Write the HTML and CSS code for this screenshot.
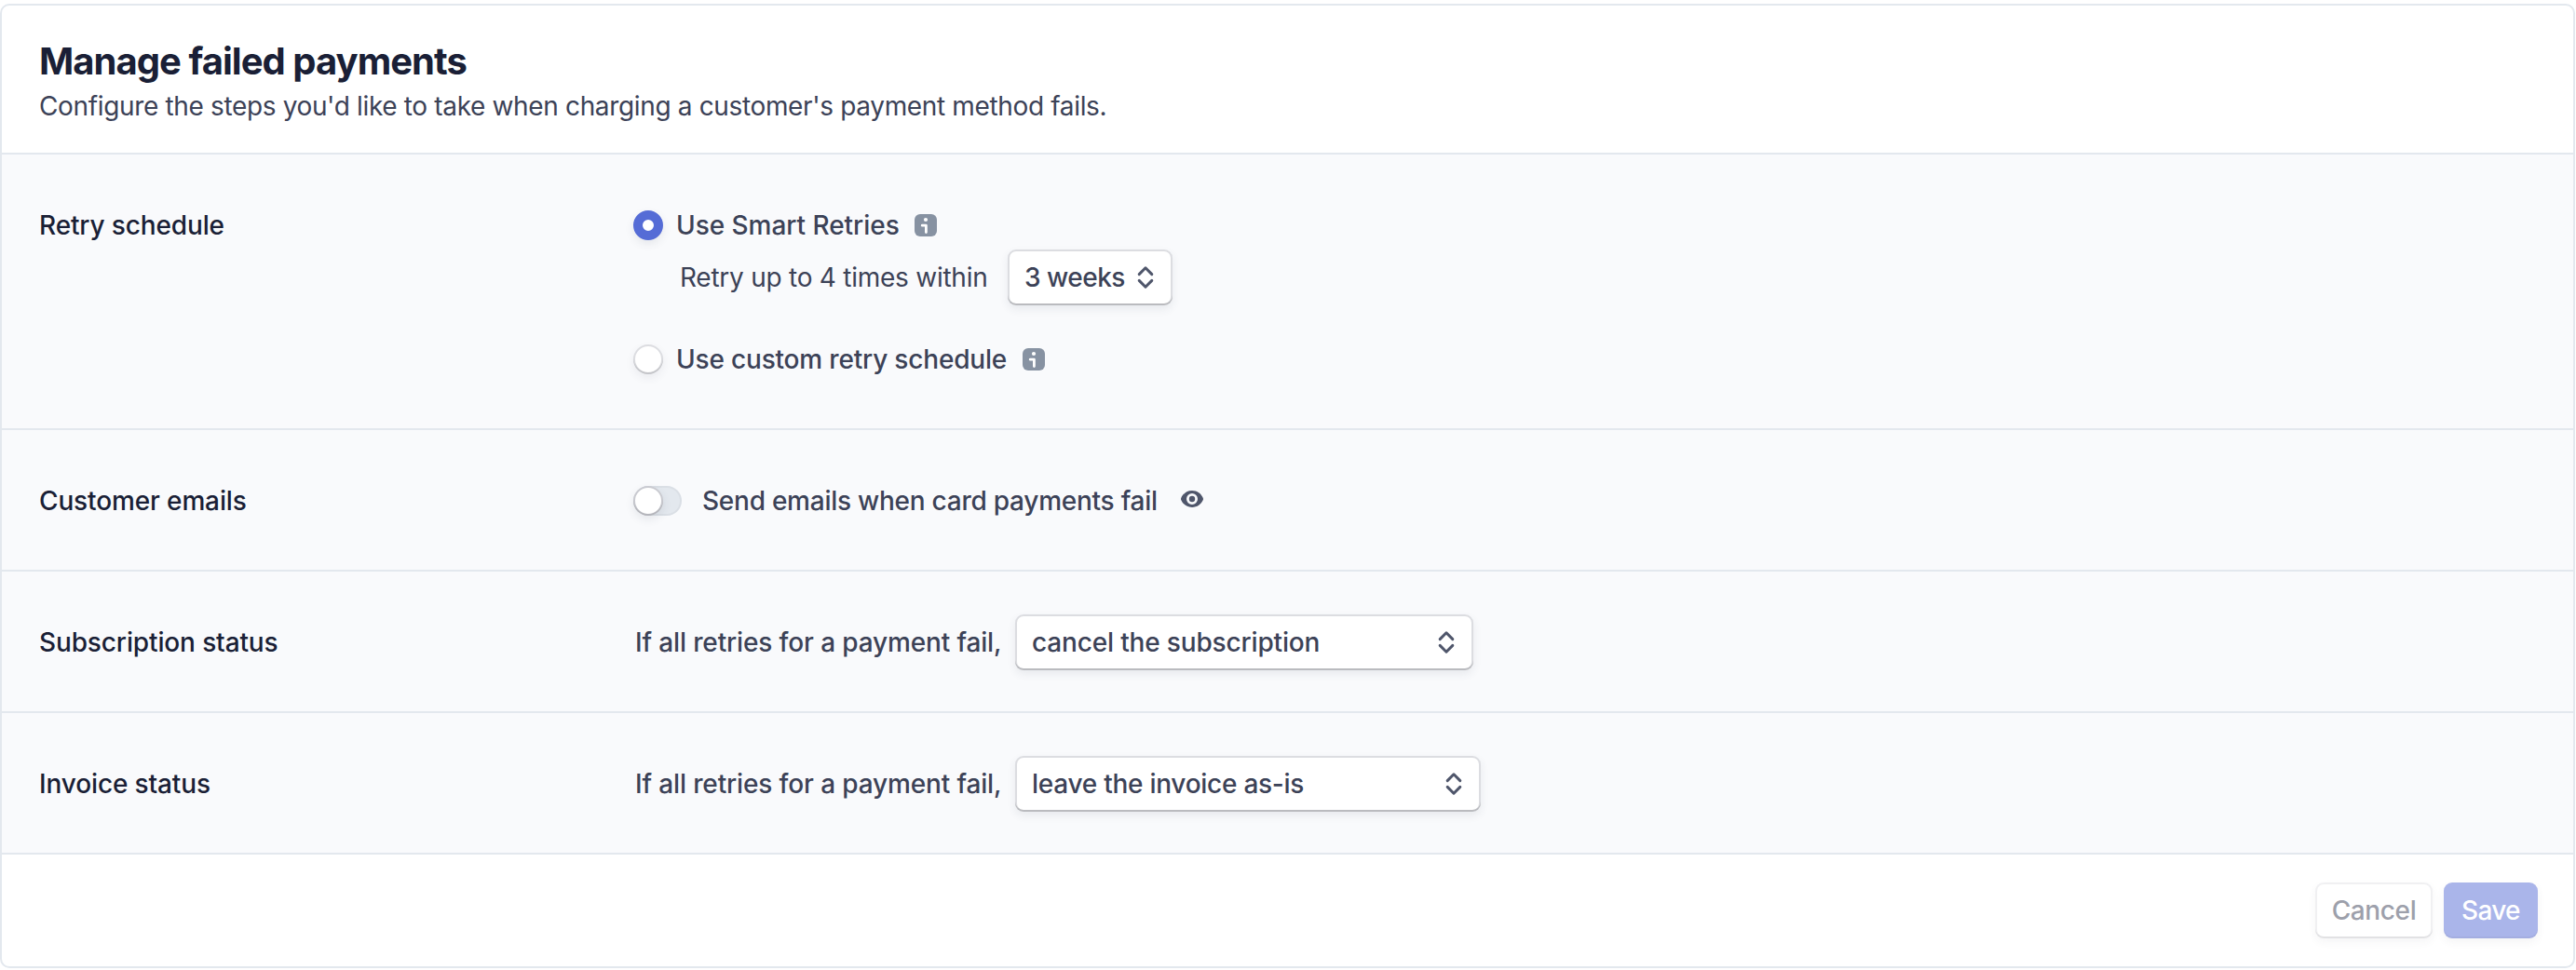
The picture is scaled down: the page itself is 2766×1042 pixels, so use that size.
FILE: index.html
```html
<!DOCTYPE html>
<html lang="en">
<head>
<meta charset="utf-8">
<title>Manage failed payments</title>
<link rel="stylesheet" href="styles.css">
</head>
<body>
<svg class="sprite" width="0" height="0" aria-hidden="true">
  <symbol id="info" viewBox="0 0 24 24">
    <rect width="24" height="24" rx="6" fill="#8792a2"/>
    <circle cx="12" cy="6" r="2.1" fill="#fff"/>
    <path d="M8.2 12.2H12.4V19.6" fill="none" stroke="#fff" stroke-width="2.800" stroke-linecap="round" stroke-linejoin="round"/>
  </symbol>
  <symbol id="chevrons" viewBox="0 0 18 26">
    <path d="M2.2 9.6L9 2.8L15.8 9.6M2.2 16.4L9 23.2L15.8 16.4" fill="none" stroke="#4f566b" stroke-width="3" stroke-linecap="round" stroke-linejoin="round"/>
  </symbol>
  <symbol id="eye" viewBox="0 0 24 18">
    <path fill="#4f566b" fill-rule="evenodd" d="M12 0C6.5 0 2.2 3.4.3 7.7Q-.3 9 .3 10.3C2.2 14.6 6.500 18 12 18S21.800 14.600 23.700 10.300Q24.300 9 23.700 7.700C21.800 3.400 17.500 0 12 0ZM12 3A6 6 0 1 1 12 15A6 6 0 1 1 12 3Z"/>
    <circle cx="12" cy="9" r="3.200" fill="#4f566b"/>
  </symbol>
</svg>
<main class="card">
  <header class="header">
    <h1 class="title">Manage failed payments</h1>
    <p class="description">Configure the steps you'd like to take when charging a customer's payment method fails.</p>
  </header>

  <section class="row">
    <h2 class="label">Retry schedule</h2>
    <div class="options">
      <div class="option option-first">
        <span class="radio radio-on"></span>
        <span class="option-text smart">Use Smart Retries</span>
        <svg class="info"><use href="#info"/></svg>
      </div>
      <div class="retry-line">
        <span class="retry-text">Retry up to 4 times within</span>
        <div class="select select-weeks"><span class="weeks">3 weeks</span><svg class="chevrons"><use href="#chevrons"/></svg></div>
      </div>
      <div class="option option-last">
        <span class="radio"></span>
        <span class="option-text custom">Use custom retry schedule</span>
        <svg class="info"><use href="#info"/></svg>
      </div>
    </div>
  </section>

  <section class="row">
    <h2 class="label">Customer emails</h2>
    <div class="control">
      <span class="toggle"><span class="knob"></span></span>
      <span class="toggle-text">Send emails when card payments fail</span>
      <svg class="eye"><use href="#eye"/></svg>
    </div>
  </section>

  <section class="row">
    <h2 class="label">Subscription status</h2>
    <div class="control">
      <span class="prefix">If all retries for a payment fail,</span>
      <div class="select select-subscription"><span class="subscription-value">cancel the subscription</span><svg class="chevrons"><use href="#chevrons"/></svg></div>
    </div>
  </section>

  <section class="row">
    <h2 class="label">Invoice status</h2>
    <div class="control">
      <span class="prefix">If all retries for a payment fail,</span>
      <div class="select select-invoice"><span class="invoice-value">leave the invoice as-is</span><svg class="chevrons"><use href="#chevrons"/></svg></div>
    </div>
  </section>

  <footer class="footer">
    <button class="button cancel">Cancel</button>
    <button class="button save">Save</button>
  </footer>
</main>
</body>
</html>
```
FILE: styles.css
```css
* { box-sizing: border-box; }

body {
  margin: 0;
  padding: 4px 1px 0 0;
  background: #fff;
  color: #3c4257;
  font: 500 28px/40px Inter, "Liberation Sans", sans-serif;
}

.sprite { display: block; }

.card {
  border: 2px solid #e3e8ee;
  border-radius: 10px;
  overflow: hidden;
  background: #fff;
}

.header {
  height: 158px;
  padding: 36px 40px 0;
}

.title {
  margin: 0;
  color: #1a1f36;
  font-size: 40px;
  font-weight: 700;
  line-height: 48px;
  letter-spacing: -0.96px;
}

.description {
  margin: 4px 0 0;
  font-weight: 400;
  letter-spacing: -0.35px;
}

.row {
  display: grid;
  grid-template-columns: 638px 1fr;
  padding: 46px 40px 44px;
  border-top: 2px solid #e3e8ee;
  background: #f9fafc;
}

.label {
  margin: 0;
  color: #1a1f36;
  font-size: 28px;
  font-weight: 500;
  line-height: 60px;
  letter-spacing: -0.13px;
}

.control,
.option,
.retry-line {
  display: flex;
  align-items: center;
  height: 60px;
  white-space: nowrap;
}

.option-first {
  height: 56px;
  padding-top: 4px;
}

.option-last { margin-top: 28px; }

.option-text {
  margin-left: 14px;
}

.smart {
  width: 256px;
  letter-spacing: -0.04px;
}

.custom {
  width: 372px;
  letter-spacing: -0.18px;
}

.radio {
  width: 32px;
  height: 32px;
  border-radius: 50%;
  background: #fff;
  box-shadow: inset 0 0 0 2px rgba(60, 66, 87, 0.18), inset 0 -2px 1px rgba(0, 0, 0, 0.12), 0 4px 10px rgba(60, 66, 87, 0.08);
}

.radio-on {
  border: 10px solid #556cd6;
  box-shadow: 0 4px 10px rgba(60, 66, 87, 0.1);
}

.info {
  width: 24px;
  height: 24px;
}

.retry-text {
  width: 352px;
  padding-left: 50px;
  box-sizing: content-box;
  font-weight: 400;
  letter-spacing: -0.25px;
}

.select {
  display: flex;
  align-items: center;
  justify-content: space-between;
  height: 60px;
  padding: 0 20px 0 18px;
  border-radius: 9px;
  background: #fff;
  box-shadow: inset 0 0 0 2px rgba(60, 66, 87, 0.18), inset 0 -2px 0 rgba(0, 0, 0, 0.16), 0 4px 10px rgba(60, 66, 87, 0.09);
}

.select-weeks {
  width: 177px;
}

.select-subscription { width: 492px; }
.select-invoice { width: 500px; }

.weeks { letter-spacing: -0.5px; }
.subscription-value { letter-spacing: -0.16px; }
.invoice-value { letter-spacing: -0.26px; }

.chevrons {
  width: 18px;
  height: 26px;
}

.toggle {
  width: 52px;
  height: 32px;
  border-radius: 16px;
  background: #e3e8ee;
  box-shadow: inset 0 0 0 2px rgba(60, 66, 87, 0.05);
}

.knob {
  display: block;
  width: 32px;
  height: 32px;
  border-radius: 50%;
  background: #fff;
  box-shadow: inset 0 0 0 2px rgba(60, 66, 87, 0.28), inset 0 -2px 1px rgba(0, 0, 0, 0.12), 0 4px 10px rgba(60, 66, 87, 0.1);
}

.toggle-text {
  width: 514px;
  margin-left: 22px;
  letter-spacing: -0.249px;
}

.eye {
  width: 24px;
  height: 18px;
  margin-top: -4px;
}

.prefix {
  width: 410px;
  padding-left: 2px;
  letter-spacing: -0.139px;
}

.footer {
  display: flex;
  justify-content: flex-end;
  gap: 12px;
  height: 122px;
  padding: 30px 38px;
  border-top: 2px solid #e3e8ee;
}

.button {
  height: 60px;
  padding: 0;
  border: 0;
  border-radius: 9px;
  font: inherit;
}

.cancel {
  width: 126px;
  background: #fff;
  color: #9da0ab;
  letter-spacing: -0.377px;
  box-shadow: inset 0 0 0 2px rgba(60, 66, 87, 0.08), inset 0 -2px 0 rgba(0, 0, 0, 0.06), 0 4px 10px rgba(60, 66, 87, 0.05);
}

.save {
  width: 101px;
  background: #aab5ea;
  color: #fff;
  letter-spacing: -0.7px;
  box-shadow: inset 0 -2px 0 rgba(60, 66, 87, 0.06), 0 4px 10px rgba(60, 66, 87, 0.06);
}
```
